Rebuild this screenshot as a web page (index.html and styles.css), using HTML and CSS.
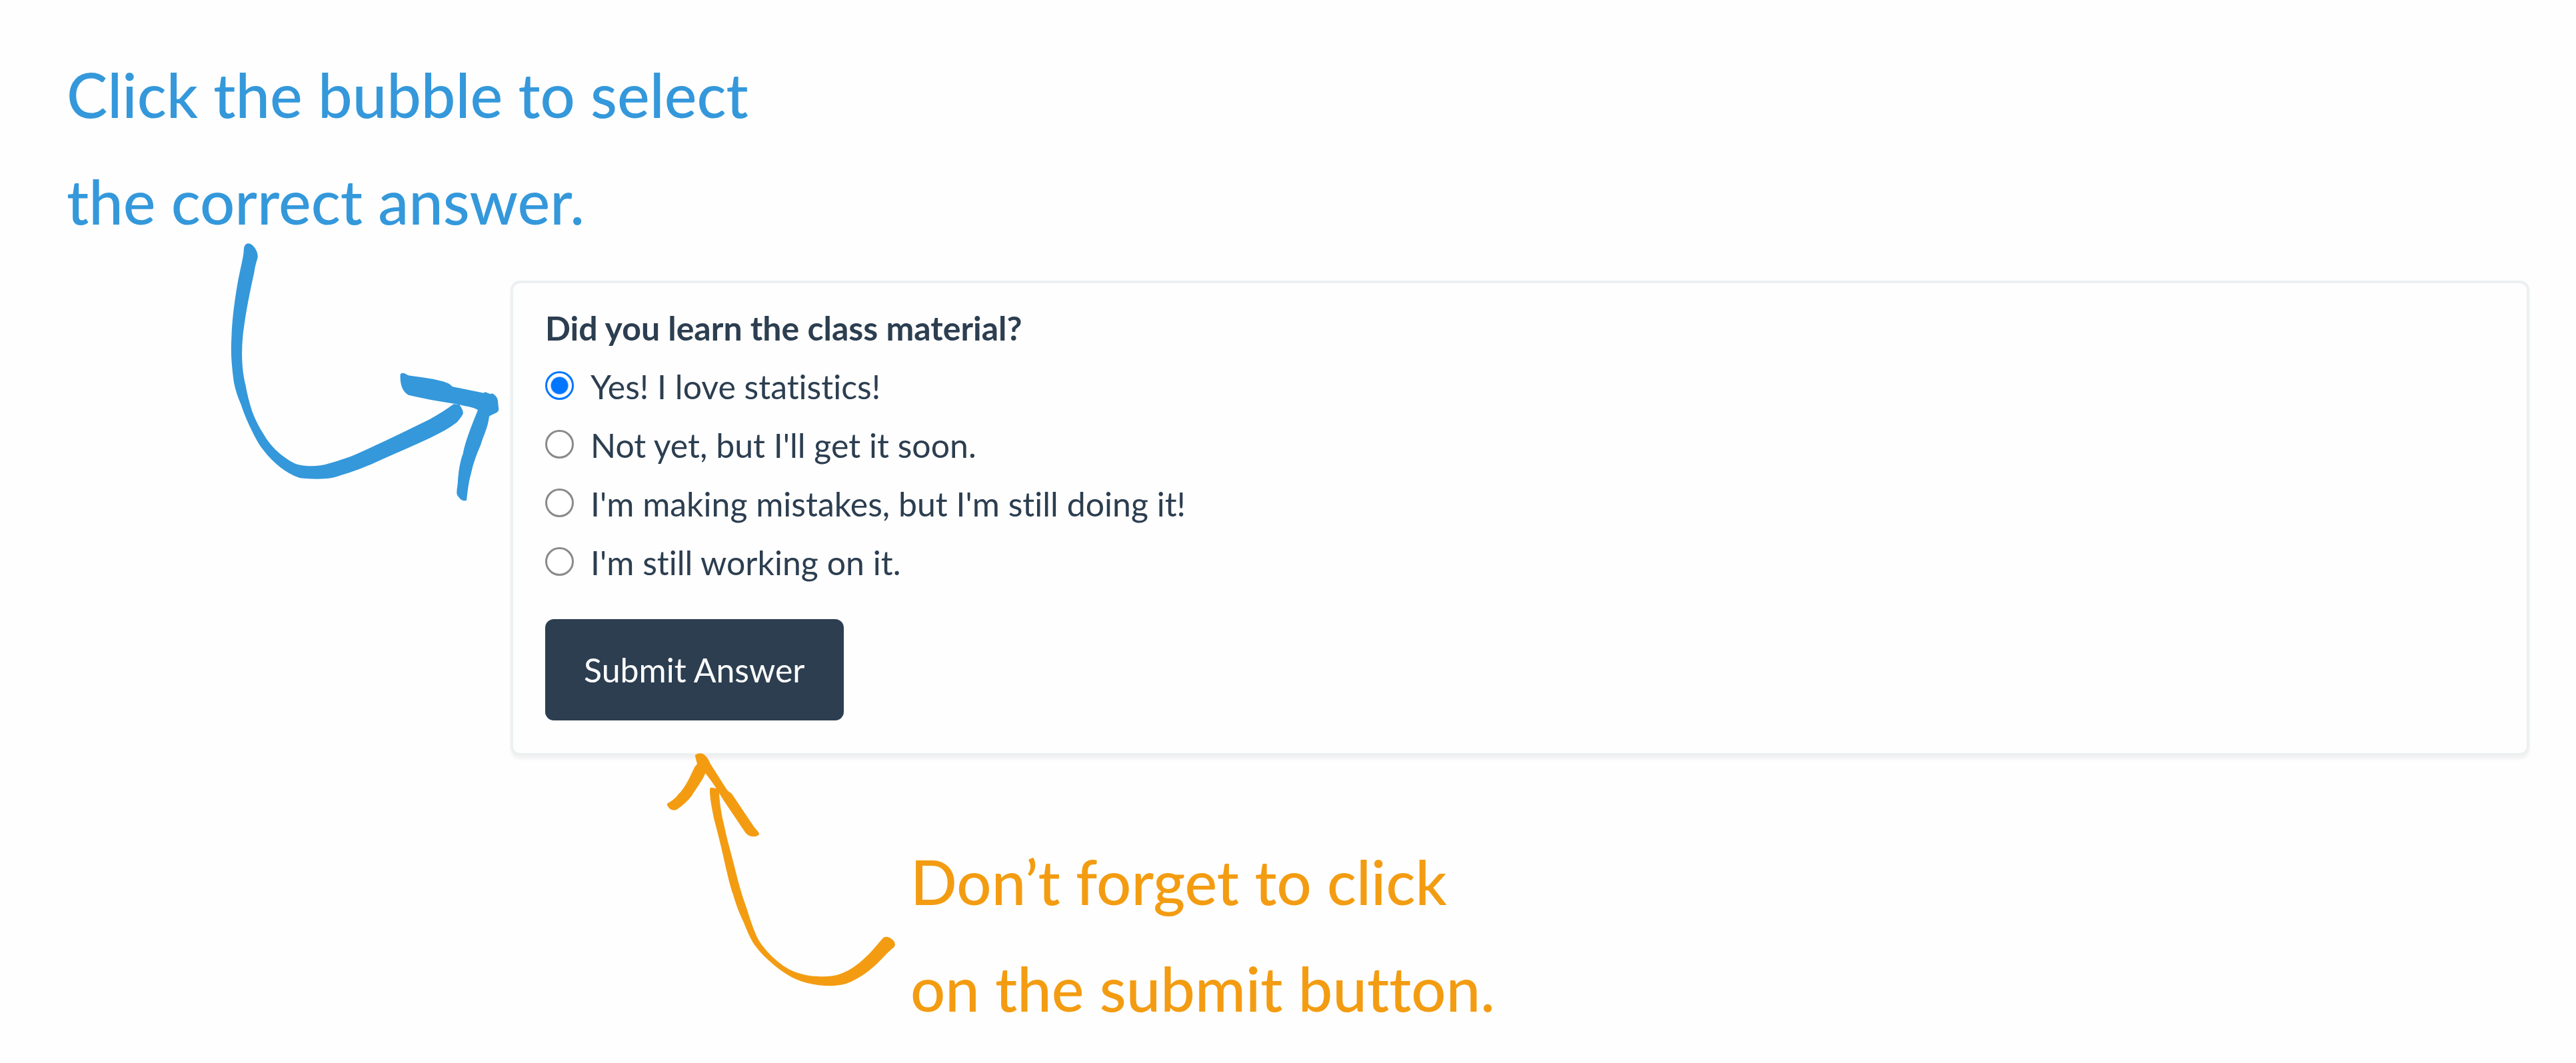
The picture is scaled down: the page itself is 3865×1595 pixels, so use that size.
FILE: index.html
```html
<!DOCTYPE html>
<html lang="en">
<head>
  <meta charset="utf-8">
  <meta name="viewport" content="width=device-width, initial-scale=1">
  <title>Answering a question</title>
  <link rel="stylesheet" href="styles.css">
</head>
<body>
  <main class="guide">
    <p class="note note-select">Click the bubble to select<br>the correct answer.</p>

    <div class="demo">
      <div class="pointer">
        <svg class="arrow-select" viewBox="78 70 1209 1164" aria-hidden="true">
          <path d="M138 95C142 74 158 68 174 80C190 94 201 114 200 135C197 150 190 165 184 205C163 300 150 370 141 430C133 480 127 540 130 600C132 650 138 680 145 710C152 750 162 790 175 830C188 865 205 900 225 930C245 965 270 995 300 1020C325 1040 350 1058 378 1068C425 1080 480 1078 522 1064C570 1050 620 1034 660 1015C760 970 880 912 975 865C1010 845 1050 822 1082 797L1108 799C1120 817 1126 830 1124 841C1117 855 1108 865 1098 878C1060 908 1020 928 975 950C900 985 830 1015 760 1046C690 1080 600 1112 535 1129C490 1137 430 1134 390 1130C355 1117 325 1100 300 1080C275 1060 252 1038 230 1010C208 983 192 955 175 920C155 880 138 840 125 800C110 765 100 735 93 700C82 620 78 560 82 500C84 430 92 360 105 280C115 215 130 160 136 120Z"/>
          <path d="M842 663C850 652 862 658 878 668C930 676 1000 682 1055 702C1066 707 1070 714 1078 719L1218 747L1222 742L1248 752L1256 749C1276 760 1282 775 1282 795L1285 820C1284 838 1260 840 1242 852C1236 905 1215 940 1204 980C1184 1025 1170 1065 1160 1110C1148 1150 1145 1190 1140 1230C1125 1236 1110 1228 1097 1204C1093 1185 1101 1165 1101 1140C1105 1085 1114 1045 1124 1020C1134 965 1166 885 1191 824C1172 810 1140 808 1105 799L1084 795C1010 784 940 770 878 756C850 740 840 705 842 663Z"/>
        </svg>
      </div>

      <form class="card">
        <fieldset class="question">
          <legend class="question-title">Did you learn the class material?</legend>
          <label class="option"><input class="radio" type="radio" name="answer" checked>Yes! I love statistics!</label>
          <label class="option"><input class="radio" type="radio" name="answer">Not yet, but I'll get it soon.</label>
          <label class="option"><input class="radio" type="radio" name="answer">I'm making mistakes, but I'm still doing it!</label>
          <label class="option"><input class="radio" type="radio" name="answer">I'm still working on it.</label>
        </fieldset>
        <button class="submit" type="button">Submit Answer</button>
      </form>
    </div>

    <div class="hint">
      <svg class="arrow-submit" viewBox="120 60 1032 1053" aria-hidden="true">
        <path d="M248 73C262 62 280 60 292 72C306 84 312 98 318 112L392 228C402 240 412 240 418 252L512 392C522 407 535 414 537 428C532 440 500 444 482 428C472 420 466 406 458 396C425 345 385 290 357 243C360 300 370 350 380 390C393 455 410 510 425 570C442 640 458 700 477 750C495 805 511 860 535 905C570 960 630 1018 690 1045C728 1060 765 1068 800 1068C840 1070 875 1068 905 1056C955 1038 1000 1000 1042 956L1094 896C1106 884 1130 892 1144 910C1152 924 1150 936 1136 943C1110 965 1090 990 1062 1016C1025 1050 975 1085 925 1102C885 1114 820 1114 750 1097C690 1083 635 1045 590 1005C555 975 535 952 515 925C495 895 480 855 465 820C446 780 433 745 420 700C405 660 395 610 385 570C368 490 350 420 334 360C322 300 314 260 315 225C318 212 332 222 344 222C330 200 312 175 295 154C280 190 255 220 234 255C212 282 190 302 166 317C148 328 124 310 122 292C140 280 160 268 172 250C205 220 225 170 248 124L258 112Z"/>
      </svg>
      <p class="note note-submit">Don’t forget to click<br>on the submit button.</p>
    </div>
  </main>
</body>
</html>
```
FILE: styles.css
```css
body {
  margin: 0;
  background: #fefefe;
  color: #2c3e50;
  font: 50px/88px Lato, sans-serif;
  font-variant-ligatures: none;
}

.guide {
  padding: 62px 70px 32px 0;
}

/* Large callouts */
.note {
  margin: 0;
  font-size: 92px;
  font-weight: 500;
  line-height: 160px;
}

.note-select {
  padding-left: 100px;
  color: #3498db;
}

.note-submit {
  color: #f39c12;
}

.demo {
  display: grid;
  grid-template-columns: 766px 1fr;
  margin-top: 39px;
}

.pointer {
  display: flex;
  justify-content: flex-end;
  align-items: flex-start;
  padding-right: 17px;
}

.arrow-select {
  width: 403px;
  height: 388px;
  margin-top: -57px;
  fill: #3498db;
}

/* Question card */
.card {
  padding: 23px 48px 49px;
  border: 4px solid #ecf0f1;
  border-radius: 14px;
  box-shadow: 0 5px 4px rgba(0, 0, 0, 0.05);
}

.question {
  margin: 0 0 41px;
  padding: 0;
  border: 0;
}

.question-title {
  padding: 0;
  font-weight: 700;
}

.option {
  display: flex;
  align-items: center;
  gap: 25px;
}

.radio {
  appearance: none;
  box-sizing: border-box;
  width: 43px;
  height: 43px;
  margin: 0 0 4px;
  border: 3px solid #8a8a8a;
  border-radius: 50%;
  background: #fff;
}

.radio:checked {
  border-color: #0075ff;
  background: radial-gradient(circle, #0075ff 12px, #fff 14px);
}

.submit {
  display: block;
  padding: 32px 58px;
  border: 0;
  border-radius: 13px;
  background: #2c3e50;
  color: #fff;
  font: inherit;
}

/* Callout under the card */
.hint {
  display: flex;
  align-items: flex-start;
  gap: 22px;
  margin-top: -5px;
  padding-left: 1000px;
}

.arrow-submit {
  flex: none;
  width: 344px;
  height: 351px;
  fill: #f39c12;
}

.note-submit {
  padding-top: 114px;
}
```
